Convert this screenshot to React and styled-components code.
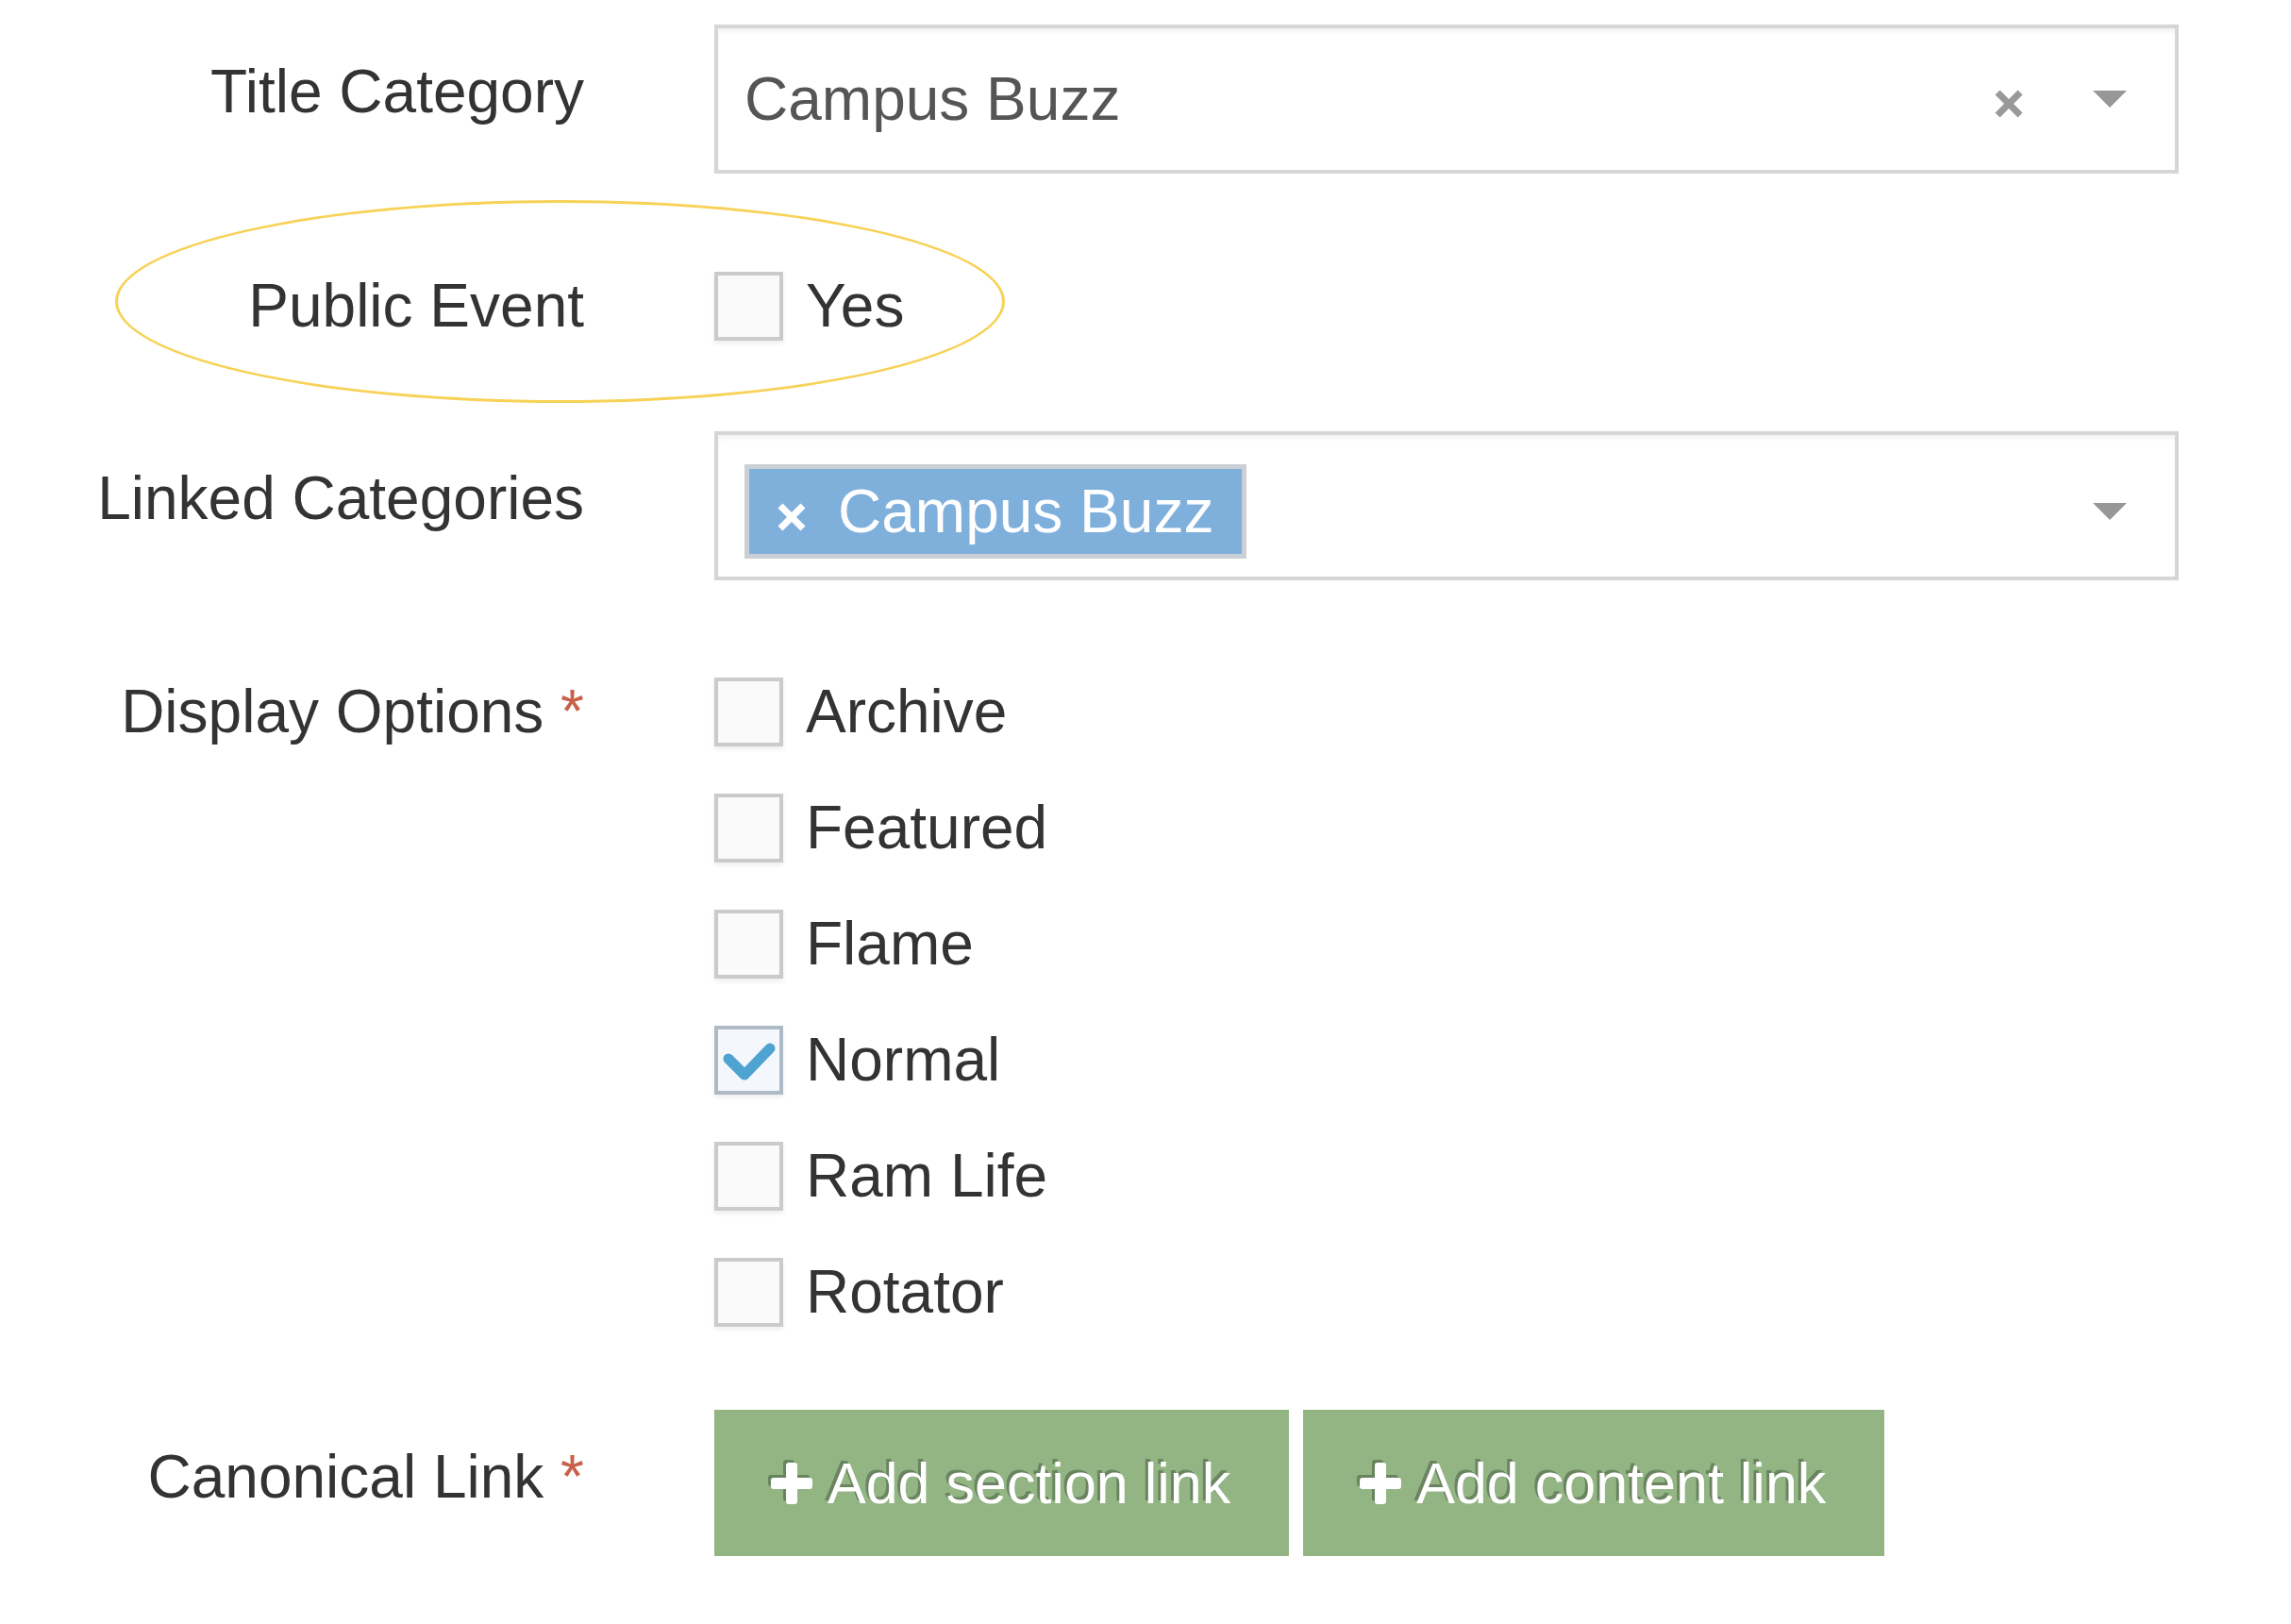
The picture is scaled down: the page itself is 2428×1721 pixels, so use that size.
import React from "react";
import styled, { createGlobalStyle } from "styled-components";

const GlobalStyle = createGlobalStyle`
  body {
    margin: 0;
    background: #fff;
    font-family: "Liberation Sans", Arial, sans-serif;
    color: #333;
  }
`;

const displayOptions = [
  { name: "Archive", checked: false },
  { name: "Featured", checked: false },
  { name: "Flame", checked: false },
  { name: "Normal", checked: true },
  { name: "Ram Life", checked: false },
  { name: "Rotator", checked: false },
];

const CheckBox = ({ checked }) => (
  <Box $checked={checked}>
    {checked && (
      <svg width="64" height="64" viewBox="0 0 64 64">
        <polyline
          points="10,31 27,48 54,20"
          fill="none"
          stroke="#4fa3d1"
          strokeWidth="11"
          strokeLinecap="round"
          strokeLinejoin="round"
        />
      </svg>
    )}
  </Box>
);

const Cross = ({ size, color, width }) => (
  <svg width={size} height={size} viewBox="0 0 30 30">
    <line x1="3" y1="3" x2="27" y2="27" stroke={color} strokeWidth={width} />
    <line x1="27" y1="3" x2="3" y2="27" stroke={color} strokeWidth={width} />
  </svg>
);

const Plus = () => (
  <PlusIcon width="44" height="44" viewBox="0 0 44 44">
    <rect x="16" y="0" width="12" height="44" rx="3" fill="#fff" />
    <rect x="0" y="16" width="44" height="12" rx="3" fill="#fff" />
  </PlusIcon>
);

const App = () => {
  return (
    <>
      <GlobalStyle />
      <Form>
        <Row $gap={0}>
          <Label $pad={26}>Title Category</Label>
          <Select>
            <SelectValue>Campus Buzz</SelectValue>
            <ClearButton>
              <Cross size={30} color="#999" width={7} />
            </ClearButton>
            <Arrow />
          </Select>
        </Row>

        <Row $gap={104}>
          <Highlight />
          <Label $lh={72}>Public Event</Label>
          <CheckRow>
            <CheckBox checked={false} />
            Yes
          </CheckRow>
        </Row>

        <Row $gap={97}>
          <Label $pad={26}>Linked Categories</Label>
          <Select $padTop={12}>
            <Tags>
              <Tag>
                <TagRemove>
                  <Cross size={30} color="#fff" width={7} />
                </TagRemove>
                Campus Buzz
              </Tag>
            </Tags>
            <Arrow />
          </Select>
        </Row>

        <Row $gap={103}>
          <Label $lh={72}>
            Display Options <Required>*</Required>
          </Label>
          <CheckList>
            {displayOptions.map((item) => (
              <CheckRow key={item.name}>
                <CheckBox checked={item.checked} />
                {item.name}
              </CheckRow>
            ))}
          </CheckList>
        </Row>

        <Row $gap={89}>
          <Label $pad={26}>
            Canonical Link <Required>*</Required>
          </Label>
          <ButtonBar>
            <AddButton type="button">
              <Plus />
              Add section link
            </AddButton>
            <AddButton type="button">
              <Plus />
              Add content link
            </AddButton>
          </ButtonBar>
        </Row>
      </Form>
    </>
  );
};

export default App;

const Form = styled.form`
  position: relative;
  width: 2309px;
  padding-top: 26px;
`;

const Row = styled.div`
  position: relative;
  display: grid;
  grid-template-columns: 619px 1552px;
  column-gap: 138px;
  align-items: start;
  margin-top: ${(p) => p.$gap}px;
`;

const Label = styled.label`
  text-align: right;
  font-size: 64px;
  line-height: ${(p) => p.$lh || 90}px;
  padding-top: ${(p) => p.$pad || 0}px;
  color: #333;
  white-space: nowrap;
`;

const Required = styled.span`
  color: #c8604a;
`;

// yellow ring drawn round the public event row
const Highlight = styled.div`
  position: absolute;
  left: 122px;
  top: -76px;
  width: 943px;
  height: 215px;
  box-sizing: border-box;
  border: 3px solid #f7d257;
  border-radius: 50%;
  pointer-events: none;
`;

const Select = styled.div`
  box-sizing: border-box;
  height: 158px;
  display: flex;
  align-items: center;
  padding: ${(p) => p.$padTop || 0}px 51px 0 28px;
  border: 4px solid #d6d6d6;
  box-shadow: inset 0 4px 4px rgba(0, 0, 0, 0.05);
  background: #fff;
`;

const SelectValue = styled.span`
  flex: 1;
  font-size: 64px;
  color: #555;
`;

const ClearButton = styled.span`
  display: flex;
  margin-right: 74px;
  margin-top: 10px;
`;

const Arrow = styled.span`
  width: 0;
  height: 0;
  border-left: 18px solid transparent;
  border-right: 18px solid transparent;
  border-top: 18px solid #979797;
`;

const Tags = styled.div`
  flex: 1;
  display: flex;
`;

const Tag = styled.span`
  box-sizing: border-box;
  height: 100px;
  display: flex;
  align-items: center;
  gap: 34px;
  padding: 0 30px 0 30px;
  background: #7fb0dc;
  border: 5px solid #cbd0d5;
  color: #fff;
  font-size: 64px;
`;

const TagRemove = styled.span`
  display: flex;
  margin-top: 12px;
`;

const CheckList = styled.div`
  display: flex;
  flex-direction: column;
  gap: 51px;
`;

const CheckRow = styled.div`
  display: flex;
  align-items: center;
  gap: 24px;
  height: 72px;
  font-size: 64px;
  color: #333;
`;

const Box = styled.span`
  box-sizing: border-box;
  width: 73px;
  height: 73px;
  display: flex;
  align-items: center;
  justify-content: center;
  border: 4px solid ${(p) => (p.$checked ? "#aebbc7" : "#cbcbcb")};
  background: ${(p) => (p.$checked ? "#f4f7fb" : "#fafafa")};
  box-shadow: 0 3px 5px rgba(0, 0, 0, 0.07);
`;

const ButtonBar = styled.div`
  display: flex;
  gap: 15px;
`;

const AddButton = styled.button`
  height: 155px;
  display: flex;
  align-items: center;
  gap: 16px;
  padding: 0 62px 0 60px;
  border: none;
  border-radius: 0;
  background: #93b584;
  color: #fff;
  font-family: "Liberation Sans", Arial, sans-serif;
  font-size: 61px;
  text-shadow: -3px -3px 0 rgba(0, 0, 0, 0.27);
  cursor: pointer;
`;

const PlusIcon = styled.svg`
  flex-shrink: 0;
  filter: drop-shadow(-3px -3px 0 rgba(0, 0, 0, 0.27));
`;
